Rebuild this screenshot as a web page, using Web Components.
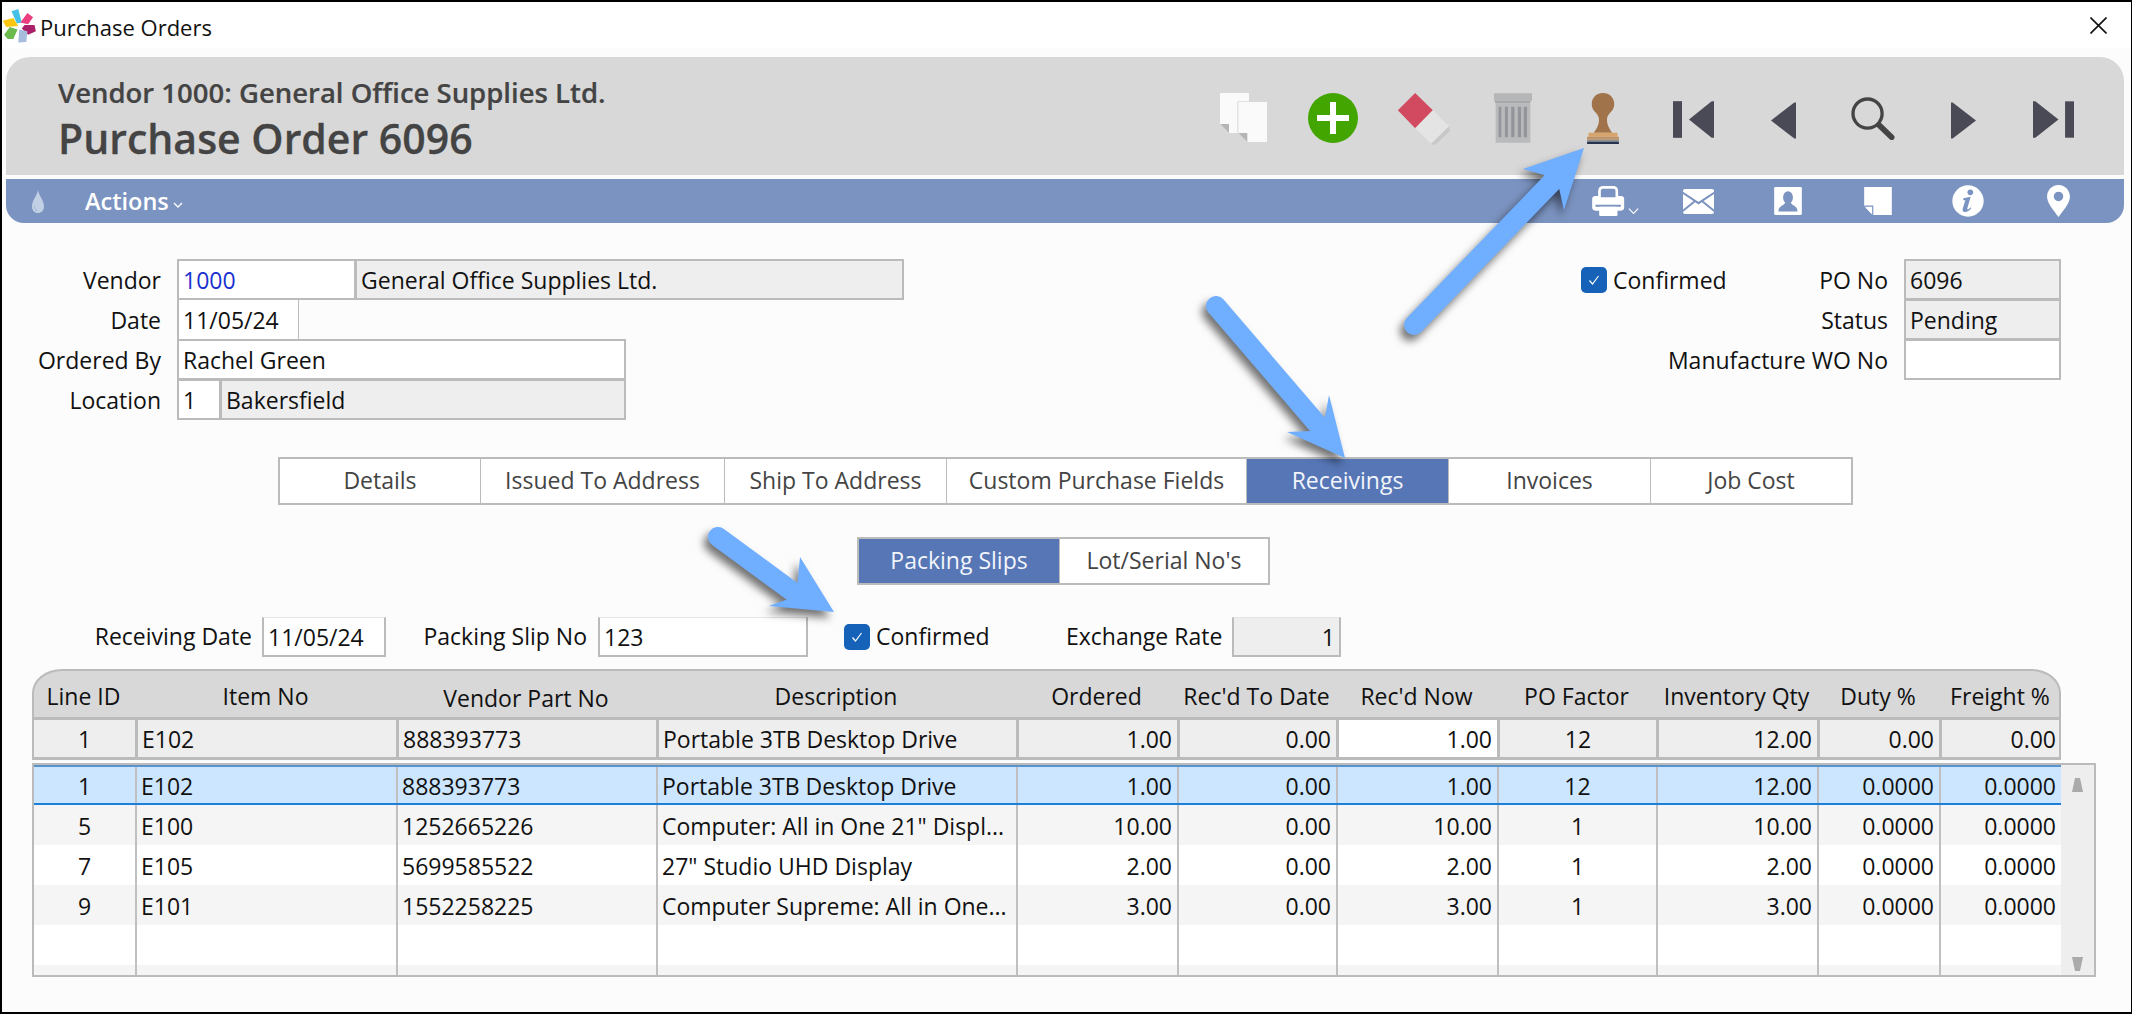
<!DOCTYPE html>
<html><head><meta charset="utf-8"><title>Purchase Orders</title>
<style>
html,body{margin:0;padding:0;background:#000}
body{font:23px/1.2 "Open Sans","Noto Sans",sans-serif;color:#111}
</style></head><body>
<app-window>
  <title-bar>Purchase Orders</title-bar>
  <po-header vendor="Vendor 1000: General Office Supplies Ltd." title="Purchase Order 6096"></po-header>
  <action-bar></action-bar>
  <form-top></form-top>
  <tab-strip style="margin:37px 0 0 276px" active="4" items="Details:200|Issued To Address:244|Ship To Address:222|Custom Purchase Fields:300|Receivings:202|Invoices:202|Job Cost:201"></tab-strip>
  <tab-strip style="margin:32px 0 0 855px" active="0" items="Packing Slips:200|Lot/Serial No's:209"></tab-strip>
  <receiving-row></receiving-row>
  <lines-grid></lines-grid>
  <po-arrows></po-arrows>
</app-window>
<script>
const def=(name,html,init)=>customElements.define(name,class extends HTMLElement{
  connectedCallback(){ if(this.shadowRoot) return; const r=this.attachShadow({mode:'open'}); r.innerHTML=typeof html==='function'?html(this):html; if(init) init(this,r);} });
const a=(e,n,d='')=>e.getAttribute(n)??d;
const BLUE='#7b93c0';

def('app-window',`<style>:host{display:block;position:relative;box-sizing:border-box;width:2132px;height:1014px;overflow:hidden;
  background:#fcfcfc;border:solid #000;border-width:2px 1px 2px 2px}</style><slot></slot>`);

def('title-bar',`<style>:host{display:flex;align-items:center;height:46px;background:#fff;font-size:22px;color:#111;position:relative}
 svg{display:block;margin:0 2px 0 0;flex:none} .x{position:absolute;left:2088px;top:15px} span{padding-top:4px}</style>
 <svg width="36" height="36" viewBox="6 24 102 102" style="margin-top:2px">
  <polygon fill="#45c1e8" points="33,33 52,27 62,65 48,68"/>
  <polygon fill="#ec3f80" points="58,65 78,38 94,50 80,70"/>
  <polygon fill="#ab2068" points="70,72 98,72 102,90 80,100 62,82"/>
  <polygon fill="#a6bedb" points="55,85 78,90 75,120 52,122"/>
  <polygon fill="#6cbb4f" points="12,100 28,78 50,85 38,112 22,112"/>
  <polygon fill="#fdc70f" points="8,60 38,52 52,75 18,78"/>
 </svg><span><slot></slot></span>
 <svg class="x" width="17" height="17" viewBox="0 0 17 17"><path d="M.5.5l16 16M16.500.5l-16 16" stroke="#111" stroke-width="1.600"/></svg>`);

const cell=(w,h,vb,body)=>`<span class="c"><svg width="${w}" height="${h}" viewBox="${vb}">${body}</svg></span>`;
const DK='#4a4a57';
def('po-header',e=>`<style>:host{display:flex;box-sizing:border-box;justify-content:space-between;height:118px;margin:9px 7px 0 4px;background:#d8d8d8;border-radius:24px 24px 0 0;color:#444;padding-left:52px}
 .t{display:flex;flex-direction:column}
 .v{font-size:27.500px;font-weight:600;margin-top:19px;line-height:34px;white-space:nowrap;-webkit-text-stroke:.2px #444}
 .p{font-size:41px;font-weight:600;line-height:54px;margin-top:1px;white-space:nowrap;-webkit-text-stroke:.3px #444}
 .i{display:flex;margin-right:26px;height:100%;}
 .c{width:90px;height:100%;display:flex;align-items:flex-start;justify-content:center;padding-top:36px;box-sizing:border-box} svg{display:block}</style>
 <div class="t"><div class="v">${a(e,'vendor')}</div><div class="p">${a(e,'title')}</div></div>
 <div class="i">
 ${cell(47,49,'90 72 141 147',`<polygon fill="#fafafa" points="90,72 177,72 177,97 142,97 142,192 117,192 90,165"/><polygon fill="#b5b5b5" points="90,165 117,165 117,192"/><polygon fill="#fafafa" points="145,99 231,99 231,219 172,219 145,192"/><polygon fill="#b5b5b5" points="145,192 172,192 172,219"/>`)}
 ${cell(50,50,'357 72 150 150',`<circle cx="432" cy="147" r="75" fill="#43a500"/><path fill="#fff" d="M384 138h39V99h18v39h39v18h-39v39h-18v-39h-39z"/>`)}
 ${cell(53,52,'622 70 158 156',`<polygon fill="#d14a60" points="624,122 676,70 729,122 676,176"/><polygon fill="#e4e4e4" points="729,122 778,170 724,222 676,176"/><polygon fill="#c8c8c8" points="778,170 780,185 735,226 724,222"/>`)}
 ${cell(38,50,'915 72 115 150',`<rect x="915" y="72" width="115" height="23" fill="#b4b6b8"/><rect x="918" y="95" width="107" height="7" fill="#a5a7aa"/><rect x="920" y="102" width="105" height="120" fill="#b9babc"/><g fill="#93959a"><rect x="929" y="113" width="8" height="92"/><rect x="948" y="113" width="9" height="92"/><rect x="967" y="113" width="10" height="92"/><rect x="987" y="113" width="10" height="92"/><rect x="1005" y="113" width="10" height="92"/></g>`)}
 ${cell(32,51,'24 38 96 154',`<path fill="#a0734a" d="M72 38C95 38 106 55 106 72C106 95 84 98 84 118C84 135 92 148 100 158L44 158C52 148 60 135 60 118C60 98 38 95 38 72C38 55 49 38 72 38Z"/><rect x="28" y="158" width="88" height="12" fill="#d6a56e"/><rect x="24" y="170" width="96" height="9" fill="#c19465"/><rect x="24" y="179" width="96" height="6" fill="#8e8d8c"/><rect x="24" y="185" width="96" height="7" fill="#27344f"/>`)}
 <span class="c" style="padding-top:44px"><svg width="41" height="37" viewBox="282 62 123 110"><rect x="282" y="62" width="27" height="110" fill="${DK}"/><path fill="${DK}" d="M405 62V172H398L330 117L398 62Z"/></svg></span>
 <span class="c" style="padding-top:45px"><svg width="25" height="37" viewBox="572 65 76 110"><path fill="${DK}" d="M648 65V175H643L572 120L643 65Z"/></svg></span>
 <span class="c" style="padding-top:40px"><svg width="44" height="43" viewBox="815 50 133 130"><circle cx="865" cy="100" r="44" fill="none" stroke="#444" stroke-width="10"/><path d="M900 135L938 172" stroke="#444" stroke-width="17" stroke-linecap="round"/></svg></span>
 <span class="c" style="padding-top:45px"><svg width="25" height="37" viewBox="1113 65 76 110"><path fill="${DK}" d="M1113 65V175H1118L1189 120L1118 65Z"/></svg></span>
 <span class="c" style="padding-top:44px"><svg width="41" height="37" viewBox="1358 62 124 110"><rect x="1455" y="62" width="27" height="110" fill="${DK}"/><path fill="${DK}" d="M1358 62V172H1365L1435 117L1365 62Z"/></svg></span>
 </div>`);

def('action-bar',`<style>:host{display:flex;box-sizing:border-box;height:44px;margin:4px 7px 0 4px;background:${BLUE};border-radius:0 0 18px 18px;align-items:center;color:#fff;position:relative}
 svg{display:block}.d{margin-left:26px}
 .a{margin-left:41px;font:600 23.500px "Open Sans",sans-serif}
 .ch{margin:9px 0 0 4px}
 .r{margin-left:auto;margin-right:21px;display:flex}
 .c{width:90px;display:flex;justify-content:center;align-items:center;height:44px}</style>
 <svg class="d" width="12" height="23" viewBox="0 0 12 23"><path fill="#c2d0e6" d="M6 0C7 6 12 10 12 16.500C12 20.500 9.500 23 6 23C2.500 23 0 20.500 0 16.500C0 10 5 6 6 0Z"/><path fill="#a4b6d6" d="M2.500 13C2.500 18 4 20 7 21.500C3 21.500 1.500 18 2.500 13Z"/></svg>
 <span class="a">Actions</span>
 <svg class="ch" width="10" height="7" viewBox="0 0 10 7"><path d="M1 1l4 4 4-4" fill="none" stroke="#fff" stroke-width="1.300"/></svg>
 <div class="r">
 <span class="c"><svg width="47" height="30" viewBox="36 318 140 90" style="margin-left:15px"><path fill="#fff" d="M70 318H98Q114 318 114 334V348H122Q132 348 132 358V382Q132 392 122 392H46Q36 392 36 382V358Q36 348 46 348H54V334Q54 318 70 318Z"/><path fill="${BLUE}" d="M68 326H100Q106 326 106 332V352H62V332Q62 326 68 326ZM46 374H122V380H46Z"/><rect x="57" y="380" width="55" height="28" rx="4" fill="#fff"/><path d="M146 386L160 400L174 386" stroke="#fff" stroke-width="3.500" fill="none"/></svg></span>
 <span class="c"><svg width="31" height="25" viewBox="308 326 92 74"><rect x="308" y="326" width="92" height="74" rx="6" fill="#fff"/><path d="M306 336L354 368L402 336M306 392L343 362M402 392L365 362" stroke="${BLUE}" stroke-width="6" fill="none"/></svg></span>
 <span class="c"><svg width="28" height="28" viewBox="582 320 84 85"><rect x="582" y="320" width="84" height="85" rx="4" fill="#fff"/><ellipse cx="624" cy="352" rx="15" ry="19" fill="${BLUE}"/><path fill="${BLUE}" d="M595 394C595 376 612 378 616 366H632C636 378 653 376 653 394Z"/></svg></span>
 <span class="c"><svg width="28" height="28" viewBox="852 320 84 85"><polygon fill="#fff" points="852,320 936,320 936,405 878,405 852,378"/><path d="M852 378H878V405" fill="none" stroke="${BLUE}" stroke-width="3.500"/><polygon fill="#fff" points="857,383 874,383 874,401"/></svg></span>
 <span class="c"><svg width="32" height="32" viewBox="1116 316 96 94"><circle cx="1164" cy="363" r="47" fill="#fff"/><circle cx="1171" cy="337" r="8.500" fill="${BLUE}"/><path fill="${BLUE}" d="M1150 355L1172 350L1162 385C1161 390 1165 390 1172 382L1174 384C1166 397 1145 402 1148 386L1156 361L1150 361Z"/></svg></span>
 <span class="c"><svg width="23" height="32" viewBox="1400 315 68 95"><path fill="#fff" d="M1434 315C1455 315 1468 332 1468 350C1468 370 1445 395 1434 410C1423 395 1400 370 1400 350C1400 332 1413 315 1434 315Z"/><circle cx="1434" cy="349" r="14" fill="${BLUE}"/></svg></span>
 </div>`);

def('fld-box',e=>`<style>:host{display:flex;flex:none;align-items:center;box-sizing:border-box;height:41px;width:${a(e,'w')}px;border:2px solid #bbb;
  padding:2px 4px 0;background:${e.hasAttribute('ro')?'#eee':'#fff'};color:${a(e,'color','#111')};white-space:nowrap;margin-left:${a(e,'ml','0')}px;
  justify-content:${e.hasAttribute('right')?'flex-end':'flex-start'}}</style><slot></slot>`);
def('fld-label',e=>`<style>:host{display:block;flex:none;text-align:right;white-space:nowrap;box-sizing:border-box;width:${a(e,'w')}px;margin:${a(e,'m','0 16px 0 0')}}</style><slot></slot>`);
def('check-box',`<style>:host{display:inline-flex;align-items:center;flex:none;width:145px}
 b{display:flex;align-items:center;justify-content:center;width:26px;height:26px;border-radius:5px;background:#1562b8;margin-right:6px;flex:none}</style>
 <b><svg width="14" height="14" viewBox="0 0 14 14"><path d="M2.500 7.500L5.500 11L11.500 3" fill="none" stroke="#fff" stroke-width="1.200"/></svg></b><span><slot></slot></span>`);

def('form-top',`<style>:host{display:flex;justify-content:space-between;padding-top:36px;height:197px;box-sizing:border-box}
 .l{display:flex;flex-direction:column}.row{display:flex;align-items:flex-start;height:40px}
 .row fld-label{line-height:42px}
 .rr{display:flex;align-items:flex-start;margin-right:70px}
 .col{display:flex;flex-direction:column}
 check-box{margin:8px -60px 0 0;line-height:26px;position:relative;z-index:1}</style>
 <div class="l">
  <div class="row"><fld-label w="159">Vendor</fld-label><fld-box w="179" color="#1a2fd0">1000</fld-box><fld-box w="549" ml="-1" ro>General Office Supplies Ltd.</fld-box></div>
  <div class="row"><fld-label w="159">Date</fld-label><fld-box w="122" style="border-width:1px 1px 1px 2px">11/05/24</fld-box></div>
  <div class="row"><fld-label w="159">Ordered By</fld-label><fld-box w="449">Rachel Green</fld-box></div>
  <div class="row"><fld-label w="159">Location</fld-label><fld-box w="44">1</fld-box><fld-box w="406" ml="-1" ro>Bakersfield</fld-box></div>
 </div>
 <div class="rr">
  <check-box>Confirmed</check-box>
  <div class="col">
   <div class="row"><fld-label w="222" m="0 16px 0 0">PO No</fld-label><fld-box w="157" ro>6096</fld-box></div>
   <div class="row"><fld-label w="222" m="0 16px 0 0">Status</fld-label><fld-box w="157" ro>Pending</fld-box></div>
   <div class="row"><fld-label w="222" m="0 16px 0 0">Manufacture WO No</fld-label><fld-box w="157"></fld-box></div>
  </div>
 </div>`);

def('tab-item',e=>`<style>:host{display:flex;align-items:center;justify-content:center;box-sizing:border-box;width:${a(e,'w')}px;height:44px;white-space:nowrap;
  color:${e.hasAttribute('on')?'#f2f5fb':'#444'};background:${e.hasAttribute('on')?'#5676b5':'#fff'};${a(e,'first')?'':'border-left:1px solid #bbb'}}</style><slot></slot>`);
def('tab-strip',e=>`<style>:host{display:flex;width:max-content;border:2px solid #bbb;background:#fff}</style>`+
  a(e,'items').split('|').map((s,i)=>{const [t,w]=s.split(':');return `<tab-item w="${w}" ${i==0?'first="1"':''} ${i==a(e,'active')?'on':''}>${t}</tab-item>`}).join(''));

def('receiving-row',`<style>:host{display:flex;align-items:center;height:40px;margin-top:32px}
 fld-box{height:40px;border-top:1px solid #e4e4e4}</style>
 <fld-label w="250" m="0 10px 0 0">Receiving Date</fld-label><fld-box w="124">11/05/24</fld-box>
 <fld-label w="167" m="0 11px 0 34px">Packing Slip No</fld-label><fld-box w="210">123</fld-box>
 <check-box style="margin-left:36px">Confirmed</check-box>
 <fld-label w="154" m="0 12px 0 77px">Exchange Rate</fld-label><fld-box w="109" ro right>1</fld-box>`);

const COLS=[103,261,260,360,161,159,161,159,161,122,122];
const GT=COLS.map(w=>w+'px').join(' ');
const GT2=[101,...COLS.slice(1)].map(w=>w+'px').join(' ');
const AL=['c','l','l','l','r','r','r','c','r','r','r'];
const HEAD=['Line ID','Item No','Vendor Part No','Description','Ordered',"Rec'd To Date","Rec'd Now",'PO Factor','Inventory Qty','Duty %','Freight %'];
const ENTRY=['1','E102','888393773','Portable 3TB Desktop Drive','1.00','0.00','1.00','12','12.00','0.00','0.00'];
const ROWS=[['1','E102','888393773','Portable 3TB Desktop Drive','1.00','0.00','1.00','12','12.00','0.0000','0.0000'],
['5','E100','1252665226','Computer: All in One 21" Displ...','10.00','0.00','10.00','1','10.00','0.0000','0.0000'],
['7','E105','5699585522','27" Studio UHD Display','2.00','0.00','2.00','1','2.00','0.0000','0.0000'],
['9','E101','1552258225','Computer Supreme: All in One...','3.00','0.00','3.00','1','3.00','0.0000','0.0000'],
Array(11).fill('')];
const cells=(r)=>r.map((t,i)=>`<span class="td ${AL[i]} ${i?'':'f'}">${t.replace(/"/g,'&quot;')}</span>`).join('');
def('lines-grid',`<style>:host{display:block;margin:12px 0 0 30px;width:2064px;position:relative}
 .head,.entry{display:grid;grid-template-columns:${GT};width:2029px}
 .row{display:grid;grid-template-columns:${GT2};width:2027px}
 .head{height:51px;box-sizing:border-box;background:#d8d8d8;border:2px solid #bbb;border-bottom:3px solid #bbb;border-radius:30px 30px 0 0 / 24px 24px 0 0;align-items:center;text-align:center;padding-top:5px}
 .head span{margin-left:-4px;white-space:nowrap;min-width:0}.head span.lo{margin-top:4px}
 .entry{height:40px;box-sizing:border-box;background:#eee;border-bottom:3px solid #bbb;border-right:2px solid #bbb}
 .td{display:flex;align-items:center;box-sizing:border-box;white-space:nowrap;overflow:hidden;border-left:2px solid #c0c0c0;padding-top:3px}
 .td.f{border-left:0}.td.l{padding-left:4px}.td.r{justify-content:flex-end;padding-right:5px}.td.c{justify-content:center}
 .entry .td{border-left:3px solid #bbb}.entry .td.f{border-left:2px solid #bbb}
 .entry .w{background:#fff}
 .frame{display:flex;box-sizing:border-box;margin-top:3px;width:2064px;height:214px;border:2px solid #bbb;position:relative}
 .rows{width:2027px;flex:none}
 .row{height:40px;background:#fff;box-sizing:border-box}
 .rows .row:nth-child(even){background:#f5f5f5}
 .row.sel{background:#cce6ff!important;border-top:2px solid #5a93cc;border-bottom:2px solid #1e7fd9}
 .row.last{height:10px;background:#f5f5f5!important}
 .sb{flex:1;background:#eee;display:flex;flex-direction:column;justify-content:space-between;align-items:center;padding:13px 0 4px}
 .sb svg{display:block}</style>
 <div class="head">${HEAD.map(h=>`<span class="${h=='Vendor Part No'?'lo':''}">${h}</span>`).join('')}</div>
 <div class="entry">${ENTRY.map((t,i)=>`<span class="td ${AL[i]} ${i?'':'f'} ${i==6?'w':''}">${t}</span>`).join('')}</div>
 <div class="frame"><div class="rows">
  ${ROWS.map((r,i)=>`<div class="row ${i?'':'sel'}">${cells(r)}</div>`).join('')}
  <div class="row last">${cells(Array(11).fill(''))}</div>
 </div><div class="sb"><svg width="11" height="14" viewBox="0 0 11 14"><path fill="#aaa" d="M3 0h5l3 14H0z"/></svg><svg width="11" height="14" viewBox="0 0 11 14"><path fill="#aaa" d="M0 0h11L8 14H3z"/></svg></div></div>`);

const arrow=(tail,end,poly)=>`<line x1="${tail[0]}" y1="${tail[1]}" x2="${end[0]}" y2="${end[1]}" stroke="#70aeff" stroke-width="20" stroke-linecap="round"/><polygon fill="#70aeff" points="${poly}"/>`;
def('po-arrows',`<style>:host{position:absolute;left:-2px;top:-2px;width:2132px;height:1014px;pointer-events:none}svg{display:block}g{filter:drop-shadow(-4px 6px 4px rgba(0,0,0,.55))}</style>
 <svg width="2132" height="1014" viewBox="0 0 2132 1014">
 <g>${arrow([1414,325],[1552,182],'1584,148 1523,169 1544,175 1559,188 1564,210')}</g>
 <g>${arrow([1216,306],[1318,425],'1345,458 1329,395 1325,417 1310,431 1287,432')}</g>
 <g>${arrow([718,537],[793,592],'834,612 800,557 797,587 791,598 769,606')}</g>
 </svg>`);
</script>
</body></html>
